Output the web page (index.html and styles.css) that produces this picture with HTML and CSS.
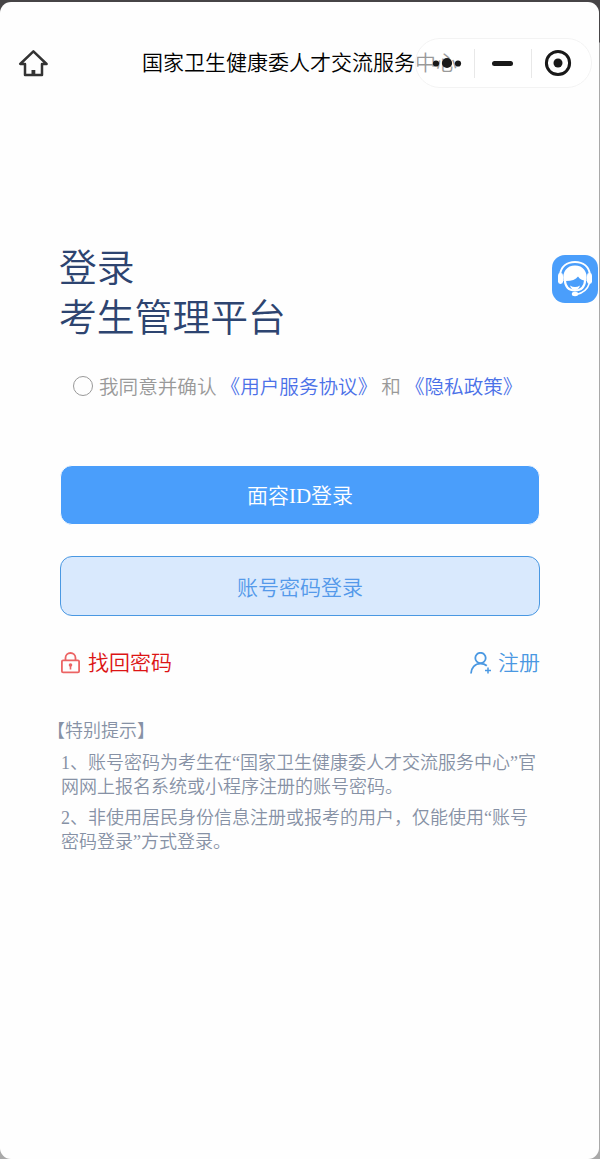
FILE: index.html
```
<!DOCTYPE html>
<html lang="zh-CN">
<head>
    <meta charset="UTF-8">
    <meta name="viewport" content="width=device-width, initial-scale=1.0">
    <title>考生管理平台</title>
    <link rel="stylesheet" href="styles.css">
</head>
<body>
    <div class="window">
        <header class="navbar">
            <svg class="home-icon" viewBox="0 0 30 28" width="30" height="28">
                <path d="M15.400 2.400 L2.200 15 H7 V26 H24 V15 H28.600 Z" fill="none" stroke="#333" stroke-width="2.500" stroke-linejoin="round"/>
                <path d="M13.500 21h3.800v5h-3.800z" fill="#333"/>
            </svg>
            <h1>国家卫生健康委人才交流服务中心</h1>
            <div class="capsule">
                <svg viewBox="0 0 30 12" width="30" height="12">
                    <circle cx="4" cy="6.500" r="3.100"/>
                    <circle cx="15" cy="6" r="5.100"/>
                    <circle cx="26" cy="6.500" r="3.100"/>
                </svg>
                <span class="capsule-line"></span>
                <span class="minimize"></span>
                <span class="capsule-line"></span>
                <svg viewBox="0 0 28 28" width="28" height="28">
                    <circle cx="14" cy="14" r="11.600" fill="none" stroke="#191919" stroke-width="3"/>
                    <circle cx="14" cy="14" r="4.500"/>
                </svg>
            </div>
        </header>

        <main>
            <h2>登录<br>考生管理平台</h2>

            <div class="agreement">
                <span class="radio"></span>
                <span>我同意并确认</span>
                <a class="user-link">《用户服务协议》</a>
                <span class="and">和</span>
                <a class="privacy-link">《隐私政策》</a>
            </div>

            <button class="btn face-login">面容ID登录</button>
            <button class="btn password-login">账号密码登录</button>

            <div class="links">
                <a class="find-password">
                    <svg viewBox="0 0 20 22" width="20" height="22">
                        <g fill="none" stroke="#ec6464" stroke-width="1.800">
                            <rect x="1.900" y="8.400" width="17.200" height="12" rx="1.200"/>
                            <path d="M5.500 8V6a5 5 0 0 1 10 0v2"/>
                        </g>
                        <circle cx="10.500" cy="13" r="1.800" fill="#ec6464"/>
                        <path d="M9.700 13h1.600v4.500H9.700z" fill="#ec6464"/>
                    </svg>
                    <span>找回密码</span>
                </a>
                <a class="register">
                    <svg viewBox="0 0 22 22" width="22" height="22">
                        <g fill="none" stroke="#4a98e2" stroke-width="1.800">
                            <circle cx="10.500" cy="6" r="5.200"/>
                            <path d="M1 21.500C1.200 15.500 5 11.600 10.500 11.600c2.600 0 4.700.8 6.300 2.200"/>
                            <path d="M18 15.500v6M15 18.500h6" stroke-width="1.500"/>
                        </g>
                    </svg>
                    <span>注册</span>
                </a>
            </div>

            <section class="tips">
                <h3>【特别提示】</h3>
                <p>1、账号密码为考生在“国家卫生健康委人才交流服务中心”官<br>网网上报名系统或小程序注册的账号密码。</p>
                <p>2、非使用居民身份信息注册或报考的用户，仅能使用“账号<br>密码登录”方式登录。</p>
            </section>
        </main>

        <!-- customer service -->
        <div class="service">
            <svg viewBox="0 0 46 48" width="46" height="48">
                <rect width="46" height="48" rx="13" fill="#4a9efb"/>
                <path d="M8 20C9 11.500 15 7 23 7S37 11.500 38 20" fill="none" stroke="#fff" stroke-width="2"/>
                <rect x="6" y="18" width="5" height="11" rx="2.400" fill="#fff"/>
                <rect x="35" y="18" width="5" height="11" rx="2.400" fill="#fff"/>
                <path d="M11.500 26C10 16.500 15 10.500 23 10.500S36 16.500 34.500 26c-3.500-.3-6.500-1.500-8.500-4.500-2.500 3.500-7.500 5-14.500 4.500z" fill="#fff"/>
                <path d="M12.800 25c.5 6.500 4.200 10.500 10.200 10.500S32.700 31.500 33.200 25" fill="none" stroke="#fff" stroke-width="2.200"/>
                <path d="M18 30.500q5 3 10 0-1.300 4.500-5 4.500T18 30.500z" fill="#fff"/>
                <path d="M37.500 28c-2 6.500-6.500 10-13 11.500" fill="none" stroke="#fff" stroke-width="1.600"/>
                <ellipse cx="23" cy="39" rx="3.200" ry="2.200" fill="#fff"/>
            </svg>
        </div>
    </div>
</body>
</html>
```
FILE: styles.css
```
* {
    box-sizing: border-box;
}
body {
    margin: 0;
    padding: 2px 1px 0 0;
    height: 1159px;
    overflow: hidden;
    background: linear-gradient(#464446 0, #464446 42px, #a9a9a9 43px, #a9a9a9 100%);
    font-family: "Liberation Serif", "Noto Sans CJK SC", serif;
    font-weight: 350;
}
.window {
    position: relative;
    height: 1157px;
    background: #fefefe;
    border-radius: 11px;
    overflow: hidden;
}
h1, h2, h3, p {
    margin: 0;
    font-weight: 350;
}
.navbar {
    display: flex;
    align-items: center;
    justify-content: center;
    position: relative;
    height: 122px;
}
.home-icon {
    position: absolute;
    left: 18px;
    top: 47px;
}
.navbar h1 {
    font-size: 21px;
    line-height: 30px;
    color: #000;
    white-space: nowrap;
}
.capsule {
    position: absolute;
    left: 415px;
    top: 36px;
    width: 177px;
    height: 50px;
    display: flex;
    align-items: center;
    padding: 0 18px 0 16px;
    border: 1px solid #f3f3f3;
    border-radius: 25px;
    background: rgba(255, 255, 255, 0.6);
    fill: #191919;
}
.capsule-line {
    width: 1px;
    height: 29px;
    margin-left: 12px;
    background: #e8e8e8;
}
.minimize {
    width: 21px;
    height: 5px;
    margin: 0 6px 0 17px;
    border-radius: 3px;
    background: #191919;
}
.capsule svg:last-child {
    margin-left: 12px;
}
main {
    padding: 119px 59px 0 60px;
}
h2 {
    margin-left: -1px;
    font-size: 37.8px;
    line-height: 50px;
    color: #2d4470;
}
.agreement {
    display: flex;
    align-items: center;
    height: 30px;
    margin-top: 27px;
    padding-left: 13px;
    font-size: 19.6px;
    white-space: nowrap;
    color: #999;
}
.radio {
    width: 20px;
    height: 20px;
    margin: 2px 6px 0 0;
    border: 1px solid #999;
    border-radius: 50%;
}
.agreement a {
    color: #4b71e8;
}
.user-link {
    margin-left: 4px;
}
.and {
    margin-left: 4px;
}
.privacy-link {
    margin-left: 4px;
}
.btn {
    display: block;
    width: 100%;
    height: 60px;
    padding: 0;
    border: 1px solid #4a98e2;
    border-radius: 12px;
    font: inherit;
    font-size: 21px;
}
.face-login {
    margin-top: 65px;
    padding-bottom: 2px;
    background: #4a9efb;
    border-color: #fefefe;
    color: #fff;
}
.password-login {
    margin-top: 31px;
    background: #d9e9fd;
    color: #5499ea;
}
.links {
    display: flex;
    justify-content: space-between;
    height: 30px;
    margin-top: 32px;
    font-size: 21px;
    line-height: 30px;
}
.links a {
    display: flex;
    align-items: center;
}
.find-password {
    gap: 8px;
    color: #dc1414;
}
.register {
    gap: 6px;
    color: #4a98e2;
}
.tips {
    margin-top: 41px;
    font-size: 18px;
    line-height: 24px;
    color: #8691a5;
}
.tips h3 {
    margin-left: -13px;
    font-size: 18px;
}
.tips p {
    margin: 8px 0 0 1px;
    white-space: nowrap;
}
.tips p + p {
    margin-top: 7px;
}
.service {
    position: absolute;
    left: 552px;
    top: 253px;
}
```
